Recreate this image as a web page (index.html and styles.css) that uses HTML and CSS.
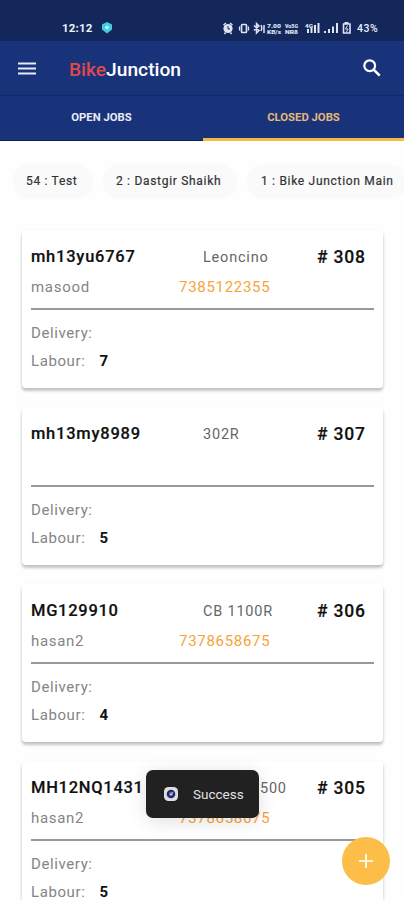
FILE: index.html
```html
<!DOCTYPE html>
<html lang="en">
<head>
<meta charset="utf-8">
<title>BikeJunction</title>
<link rel="stylesheet" href="styles.css">
</head>
<body>
<div class="screen">
  <div class="status">
    <span class="time">12:12</span>
    <svg class="shield" width="12" height="12" viewBox="0 0 12 12"><path d="M6 0l5 2.500v5L6 11.500L1 7.500v-5z" fill="#45cbe0"/><path d="M6 3.500v4M4 5.500h4" stroke="#c9fbff" stroke-width="1.300"/></svg>
    <svg class="sys" width="134" height="14" viewBox="0 0 134 14" fill="none" stroke="#dfe4f2">
      <circle cx="6" cy="7.500" r="4.600" fill="#dfe4f2" stroke="none"/><path d="M1.500 4l2.500-2M10.500 4L8 2M3.500 11.500L2.500 13M8.500 11.500l1 1.500" stroke-width="1.500"/><path d="M6 5v3h2" stroke="#14275a"/>
      <rect x="19.500" y="3.500" width="5" height="8" rx="1" stroke-width="1.700"/><path d="M17.500 5.500v4M26.500 5.500v4" stroke-width="1.200"/>
      <path d="M32 4.500l5 5-2.500 2.500V2.500L37 5l-5 4.500M39 4q1.500 3 0 6M42 4v8" stroke-width="1.500"/>
      <g fill="#dfe4f2" stroke="none" class="tiny"><text x="45" y="6.500" textLength="14" lengthAdjust="spacingAndGlyphs">7.00</text><text x="45" y="13" textLength="14" lengthAdjust="spacingAndGlyphs">KB/s</text><text x="63" y="6.500" textLength="13" lengthAdjust="spacingAndGlyphs">Vo5G</text><text x="63" y="13" textLength="13" lengthAdjust="spacingAndGlyphs">NR8</text><text x="83" y="6.500" textLength="8" lengthAdjust="spacingAndGlyphs">4G</text></g>
      <path d="M86 12V8M89.500 12V7M93 12V4M96.500 12V2" stroke-width="2"/>
      <path d="M103 12v-2M107 12V8M111 12V5.500M115 12V2" stroke-width="2"/>
      <path d="M122.500 1.800h4M121.500 3h6.500v9h-6.500z" stroke-width="1.600"/><path d="M125.500 4.500L123.500 8h2.500l-1.500 3" stroke-width="1"/>
    </svg>
    <span class="battery">43%</span>
  </div>
  <header class="appbar">
    <svg class="menu" width="18" height="13" viewBox="0 0 18 13"><path d="M0 1.500h18M0 6.500h18M0 11.500h18" stroke="#e8ebf7" stroke-width="2.200"/></svg>
    <h1 class="brand"><span class="bike">Bike</span>Junction</h1>
    <svg class="search" width="18" height="18" viewBox="0 0 18 18" fill="none" stroke="#fff"><circle cx="6.700" cy="6.700" r="5.400" stroke-width="2.200"/><path d="M10.700 10.700l6 6" stroke-width="2.600"/></svg>
  </header>
  <nav class="tabs"><div class="tab"><span>OPEN JOBS</span></div><div class="tab active"><span>CLOSED JOBS</span></div></nav>
  <div class="chips"><span class="chip test">54 : Test</span><span class="chip dastgir">2 : Dastgir Shaikh</span><span class="chip main">1 : Bike Junction Main</span></div>
  <main class="jobs">
    <article class="card">
      <div class="top"><b class="plate">mh13yu6767</b><span class="model">Leoncino</span><b class="num"># 308</b></div>
      <div class="owner"><span>masood</span><span class="phone">7385122355</span></div>
      <div class="line">Delivery:</div><div class="line">Labour:<b>7</b></div>
    </article>
    <article class="card">
      <div class="top"><b class="plate">mh13my8989</b><span class="model">302R</span><b class="num"># 307</b></div>
      <div class="owner"></div>
      <div class="line">Delivery:</div><div class="line">Labour:<b>5</b></div>
    </article>
    <article class="card">
      <div class="top"><b class="plate upper">MG129910</b><span class="model">CB 1100R</span><b class="num"># 306</b></div>
      <div class="owner"><span>hasan2</span><span class="phone">7378658675</span></div>
      <div class="line">Delivery:</div><div class="line">Labour:<b>4</b></div>
    </article>
    <article class="card">
      <div class="top"><b class="plate upper">MH12NQ1431</b><span class="model">Classic 500</span><b class="num"># 305</b></div>
      <div class="owner"><span>hasan2</span><span class="phone">7378658675</span></div>
      <div class="line">Delivery:</div><div class="line">Labour:<b>5</b></div>
    </article>
  </main>
  <div class="toast">
    <svg width="14" height="14" viewBox="0 0 14 14"><rect width="14" height="14" rx="4.500" fill="#dedee5"/><circle cx="7" cy="7" r="4.300" fill="#24286b"/><circle cx="7" cy="7" r="2" fill="#657bb0"/><path d="M6 7l1 1 2-3" stroke="#d8e6ef" fill="none" stroke-width=".8"/></svg>
    <span>Success</span>
  </div>
  <button class="fab" aria-label="Add"><svg width="14" height="14" viewBox="0 0 14 14"><path d="M7 0v14M0 7h14" stroke="#fff7df" stroke-width="2"/></svg></button>
</div>
</body>
</html>
```
FILE: styles.css
```css
* { box-sizing: border-box; }
body { margin: 0; font-family: Roboto, sans-serif; background: #fefefe; }
.screen { position: relative; width: 404px; height: 900px; overflow: hidden; }
.status { display: flex; align-items: center; height: 41px; padding: 15px 0 0 62px; background: #14275a; color: #edf0fa; }
.time { width: 31px; font-size: 11.5px; font-weight: 700; letter-spacing: .15px; white-space: nowrap; }
.shield { margin-left: 8px; }
.sys { margin-left: 109px; flex: none; }
.tiny { font-size: 6px; font-weight: 900; }
.battery { margin-left: 1px; font-size: 10.5px; font-weight: 500; letter-spacing: .5px; }
.appbar { display: flex; align-items: center; height: 55px; padding: 0 23px 0 18px; background: #19337a; border-bottom: 1px solid #142a68; }
.brand { margin: 2px 0 0 33px; font-size: 19.2px; font-weight: 500; color: #fff; white-space: nowrap; }
.bike { color: #df484c; }
.search { margin-left: auto; }
.tabs { display: grid; grid-template-columns: 203px 201px; height: 45px; background: #19337a; border-bottom: 1px solid #101e58; }
.tab { display: flex; align-items: center; justify-content: center; height: 45px; font-size: 11.3px; font-weight: 700; color: #e8ebf7; border-bottom: 3px solid transparent; }
.active { color: #e4b878; border-bottom-color: #f6b947; }
.chips { display: flex; gap: 10px; height: 89px; padding: 24px 0 0 13px; }
.chip { flex: none; height: 33px; padding-left: 13px; border-radius: 16px; background: #fafafa; color: #333; font-size: 12px; letter-spacing: .7px; line-height: 33px; white-space: nowrap; box-shadow: 0 0 3px #fafafa; -webkit-text-stroke: .2px #333; }
.test { width: 80px; }
.dastgir { width: 134px; }
.main { width: 160px; padding-left: 14px; }
.jobs { display: grid; gap: 19px; padding: 0 21px 0 22px; }
.card { height: 158px; padding: 15px 9px 0; background: #fff; border-radius: 4px; box-shadow: 0 3px 3px rgba(0,0,0,.21), 0 1px 4px rgba(0,0,0,.05); }
.top { display: grid; grid-template-columns: 172px 114px 1fr; height: 30px; line-height: 24px; white-space: nowrap; }
.plate { font-size: 16.5px; font-weight: 500; letter-spacing: .75px; color: #111; -webkit-text-stroke: .2px #111; }
.model { padding-top: 1px; font-size: 14.5px; letter-spacing: .8px; color: #666; }
.num { font-size: 17.5px; font-weight: 500; letter-spacing: .8px; color: #111; -webkit-text-stroke: .2px #111; }
.owner { display: grid; grid-template-columns: 148px 1fr; height: 35px; font-size: 15px; line-height: 24px; letter-spacing: .7px; color: #858585; border-bottom: 2px solid #999; }
.phone { color: #f7a339; }
.line { height: 28px; font-size: 15px; line-height: 28px; letter-spacing: .6px; color: #858585; }
.line:nth-child(3) { margin-top: 9px; }
.line b { display: inline-block; margin-left: 14px; font-weight: 700; color: #111; }
.upper { letter-spacing: .72px; }
.toast { position: absolute; left: 146px; top: 770px; display: flex; align-items: center; gap: 15px; width: 113px; height: 48px; padding: 0 0 0 18px; border-radius: 7px; background: #212121; box-shadow: 0 3px 18px rgba(0,0,0,.13); color: #e1e1e1; font-size: 13.5px; }
.fab { position: absolute; left: 342px; top: 837px; display: grid; place-items: center; width: 48px; height: 48px; padding: 0; border: 0; border-radius: 50%; background: #fdbd49; }
```
